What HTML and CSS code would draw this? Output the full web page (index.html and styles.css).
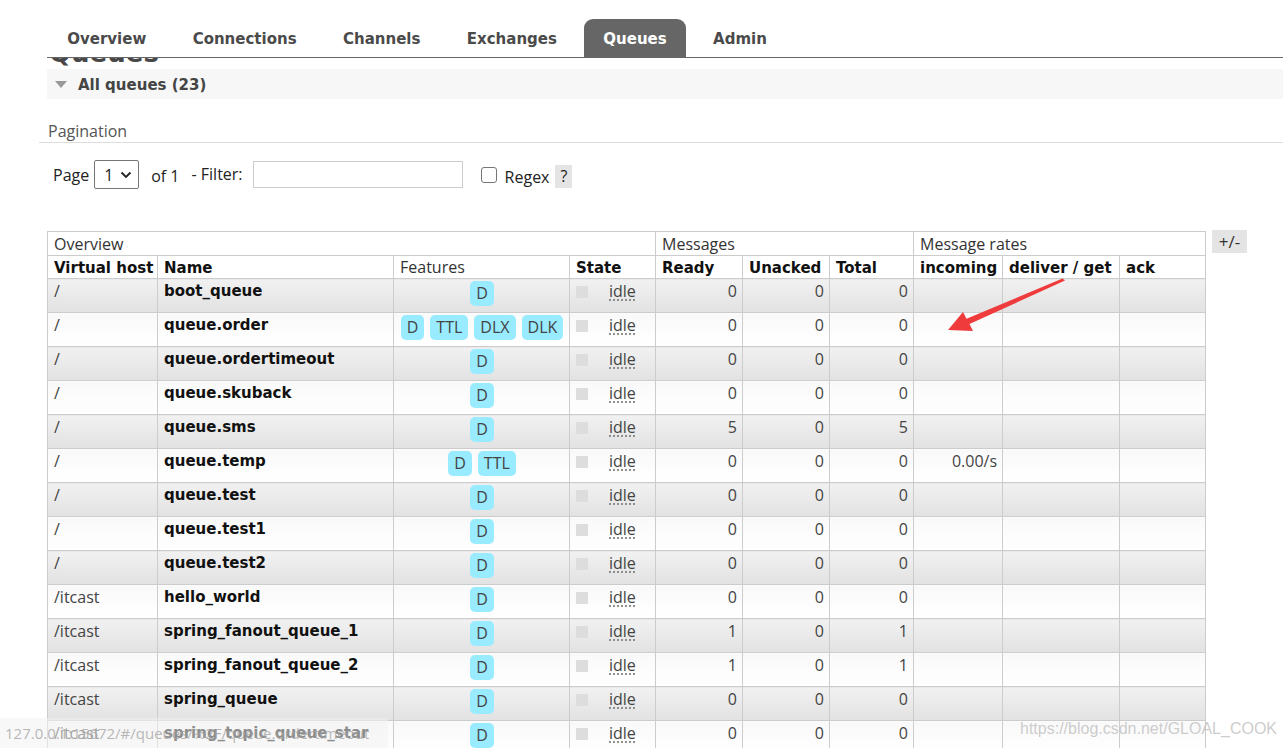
FILE: index.html
```html
<!DOCTYPE html>
<html>
<head>
<meta charset="utf-8">
<title>Queues</title>
<link rel="stylesheet" href="styles.css">
</head>
<body>
<div class="nav">
  <ul class="tabs">
    <li class="tab">Overview</li>
    <li class="tab">Connections</li>
    <li class="tab">Channels</li>
    <li class="tab">Exchanges</li>
    <li class="tab active">Queues</li>
    <li class="tab">Admin</li>
  </ul>
</div>
<div class="title-clip"><h1 class="title">Queues</h1></div>
<div class="section-bar"><span class="tri"></span><span class="section-title">All queues (23)</span></div>
<div class="pag-head">Pagination</div>
<div class="pag-row">
  <span class="lbl-page">Page</span>
  <span class="select"><span>1</span><svg class="chev" width="12" height="8" viewBox="0 0 12 8"><path d="M1.5 1.5 L6 6 L10.5 1.5" fill="none" stroke="#222" stroke-width="1.8"/></svg></span>
  <span class="lbl-of">of 1</span>
  <span class="lbl-filter">- Filter:</span>
  <span class="input"></span>
  <span class="checkbox"></span>
  <span class="lbl-regex">Regex</span>
  <span class="help">?</span>
</div>
<div class="table-wrap">
<table class="queues">
  <colgroup>
    <col class="c-vhost"><col class="c-name"><col class="c-feat"><col class="c-state">
    <col class="c-ready"><col class="c-unacked"><col class="c-total">
    <col class="c-in"><col class="c-deliver"><col class="c-ack">
  </colgroup>
  <thead>
    <tr class="grp">
      <th colspan="4">Overview</th>
      <th colspan="3">Messages</th>
      <th colspan="3">Message rates</th>
    </tr>
    <tr class="cols">
      <th>Virtual host</th><th>Name</th><th class="light">Features</th><th>State</th>
      <th>Ready</th><th>Unacked</th><th>Total</th>
      <th>incoming</th><th>deliver / get</th><th>ack</th>
    </tr>
  </thead>
  <tbody>
    <tr class="odd"><td>/</td><td class="name">boot_queue</td><td class="feat"><span class="badges"><span class="badge">D</span></span></td><td class="state"><span class="sq"></span><span class="idle">idle</span></td><td class="num">0</td><td class="num">0</td><td class="num">0</td><td class="num"></td><td></td><td></td></tr>
    <tr class="even"><td>/</td><td class="name">queue.order</td><td class="feat"><span class="badges"><span class="badge">D</span><span class="badge">TTL</span><span class="badge">DLX</span><span class="badge">DLK</span></span></td><td class="state"><span class="sq"></span><span class="idle">idle</span></td><td class="num">0</td><td class="num">0</td><td class="num">0</td><td class="num"></td><td></td><td></td></tr>
    <tr class="odd"><td>/</td><td class="name">queue.ordertimeout</td><td class="feat"><span class="badges"><span class="badge">D</span></span></td><td class="state"><span class="sq"></span><span class="idle">idle</span></td><td class="num">0</td><td class="num">0</td><td class="num">0</td><td class="num"></td><td></td><td></td></tr>
    <tr class="even"><td>/</td><td class="name">queue.skuback</td><td class="feat"><span class="badges"><span class="badge">D</span></span></td><td class="state"><span class="sq"></span><span class="idle">idle</span></td><td class="num">0</td><td class="num">0</td><td class="num">0</td><td class="num"></td><td></td><td></td></tr>
    <tr class="odd"><td>/</td><td class="name">queue.sms</td><td class="feat"><span class="badges"><span class="badge">D</span></span></td><td class="state"><span class="sq"></span><span class="idle">idle</span></td><td class="num">5</td><td class="num">0</td><td class="num">5</td><td class="num"></td><td></td><td></td></tr>
    <tr class="even"><td>/</td><td class="name">queue.temp</td><td class="feat"><span class="badges"><span class="badge">D</span><span class="badge">TTL</span></span></td><td class="state"><span class="sq"></span><span class="idle">idle</span></td><td class="num">0</td><td class="num">0</td><td class="num">0</td><td class="num">0.00/s</td><td></td><td></td></tr>
    <tr class="odd"><td>/</td><td class="name">queue.test</td><td class="feat"><span class="badges"><span class="badge">D</span></span></td><td class="state"><span class="sq"></span><span class="idle">idle</span></td><td class="num">0</td><td class="num">0</td><td class="num">0</td><td class="num"></td><td></td><td></td></tr>
    <tr class="even"><td>/</td><td class="name">queue.test1</td><td class="feat"><span class="badges"><span class="badge">D</span></span></td><td class="state"><span class="sq"></span><span class="idle">idle</span></td><td class="num">0</td><td class="num">0</td><td class="num">0</td><td class="num"></td><td></td><td></td></tr>
    <tr class="odd"><td>/</td><td class="name">queue.test2</td><td class="feat"><span class="badges"><span class="badge">D</span></span></td><td class="state"><span class="sq"></span><span class="idle">idle</span></td><td class="num">0</td><td class="num">0</td><td class="num">0</td><td class="num"></td><td></td><td></td></tr>
    <tr class="even"><td>/itcast</td><td class="name">hello_world</td><td class="feat"><span class="badges"><span class="badge">D</span></span></td><td class="state"><span class="sq"></span><span class="idle">idle</span></td><td class="num">0</td><td class="num">0</td><td class="num">0</td><td class="num"></td><td></td><td></td></tr>
    <tr class="odd"><td>/itcast</td><td class="name">spring_fanout_queue_1</td><td class="feat"><span class="badges"><span class="badge">D</span></span></td><td class="state"><span class="sq"></span><span class="idle">idle</span></td><td class="num">1</td><td class="num">0</td><td class="num">1</td><td class="num"></td><td></td><td></td></tr>
    <tr class="even"><td>/itcast</td><td class="name">spring_fanout_queue_2</td><td class="feat"><span class="badges"><span class="badge">D</span></span></td><td class="state"><span class="sq"></span><span class="idle">idle</span></td><td class="num">1</td><td class="num">0</td><td class="num">1</td><td class="num"></td><td></td><td></td></tr>
    <tr class="odd"><td>/itcast</td><td class="name">spring_queue</td><td class="feat"><span class="badges"><span class="badge">D</span></span></td><td class="state"><span class="sq"></span><span class="idle">idle</span></td><td class="num">0</td><td class="num">0</td><td class="num">0</td><td class="num"></td><td></td><td></td></tr>
    <tr class="even"><td>/itcast</td><td class="name">spring_topic_queue_star</td><td class="feat"><span class="badges"><span class="badge">D</span></span></td><td class="state"><span class="sq"></span><span class="idle">idle</span></td><td class="num">0</td><td class="num">0</td><td class="num">0</td><td class="num"></td><td></td><td></td></tr>
  </tbody>
</table>
<span class="toggle">+/-</span>
</div>
<svg class="arrow" width="1283" height="748" viewBox="0 0 1283 748">
  <polygon points="948,330 963,312 966.5,318.8 1062.5,278.6 1065,280.6 969.5,323.9 973,331" fill="#ef3b3b"/>
</svg>
<div class="statusbar">127.0.0.1:15672/#/queues/%2F/queue.ordertimeout</div>
<div class="watermark">https://blog.csdn.net/GLOAL_COOK</div>
</body>
</html>
```

FILE: styles.css
```css
html, body {
  margin: 0;
  padding: 0;
  overflow: hidden;
  background: #fff;
}
body {
  font-family: "Open Sans", "Noto Sans", sans-serif;
  font-size: 16px;
  color: #444;
  width: 1283px;
  height: 748px;
  position: relative;
}

/* nav */
.nav {
  margin-left: 47px;
  padding-top: 19px;
  border-bottom: 1px solid #666;
}
.tabs {
  list-style: none;
  margin: 0;
  padding: 0 0 0 1px;
  display: flex;
  gap: 8px;
}
.tab {
  font-family: "DejaVu Sans", Verdana, sans-serif;
  font-weight: bold;
  font-size: 15px;
  color: #4a4a4a;
  height: 38px;
  box-sizing: border-box;
  padding: 2px 19.2px 0;
  line-height: 36px;
  border-radius: 9px 9px 0 0;
}
.tab.active {
  background: #666;
  color: #fff;
}

/* clipped heading */
.title-clip {
  height: 11px;
  overflow: hidden;
  margin-left: 49px;
}
.title {
  margin: -20px 0 0 0;
  font-family: "DejaVu Sans", Verdana, sans-serif;
  font-weight: bold;
  font-size: 26px;
  line-height: 30px;
  color: #484848;
}

.section-bar {
  margin-left: 47px;
  height: 30px;
  background: #f7f7f7;
  display: flex;
  align-items: center;
  padding-left: 8px;
}
.tri {
  width: 0;
  height: 0;
  border-left: 6.5px solid transparent;
  border-right: 6.5px solid transparent;
  border-top: 7px solid #999;
  margin-right: 11px;
}
.section-title {
  font-family: "DejaVu Sans", Verdana, sans-serif;
  font-weight: bold;
  font-size: 15px;
  color: #444;
  padding-top: 1px;
}

/* pagination */
.pag-head {
  margin: 22px 0 0 39px;
  padding: 0 0 1px 9px;
  line-height: 20px;
  color: #555;
  border-bottom: 1px solid #ddd;
}
.pag-row {
  margin: 17px 0 0 53px;
  display: flex;
  align-items: center;
  height: 29px;
  color: #222;
}
.select {
  margin-left: 5px;
  width: 45px;
  height: 29px;
  box-sizing: border-box;
  border: 1px solid #767676;
  border-radius: 2px;
  display: flex;
  align-items: center;
  padding-left: 9px;
  gap: 7px;
}
.chev { display: block; }
.lbl-of { margin-left: 12px; margin-top: 2px; }
.lbl-filter { margin-left: 12px; margin-top: -2px; }
.input {
  margin-left: 10px;
  width: 210px;
  height: 27px;
  box-sizing: border-box;
  border: 1px solid #ccc;
}
.checkbox {
  margin-left: 18px;
  width: 16px;
  height: 16px;
  box-sizing: border-box;
  border: 1px solid #767676;
  border-radius: 3px;
}
.lbl-regex { margin-left: 8px; margin-top: 5px; }
.help {
  margin-left: 6px;
  margin-top: 4px;
  width: 17px;
  height: 23px;
  background: #e4e4e4;
  text-align: center;
  line-height: 23px;
}

/* table */
.table-wrap {
  margin: 42px 0 0 47px;
  display: flex;
  align-items: flex-start;
  gap: 6px;
}
.queues {
  border-collapse: collapse;
  table-layout: fixed;
  width: 1158px;
}
.c-vhost { width: 110px; }
.c-name { width: 236px; }
.c-feat { width: 176px; }
.c-state { width: 86px; }
.c-ready { width: 87px; }
.c-unacked { width: 87px; }
.c-total { width: 84px; }
.c-in { width: 89px; }
.c-deliver { width: 117px; }
.c-ack { width: 86px; }

.queues th, .queues td {
  border: 1px solid #ccc;
  padding: 0 5px 0 6px;
  text-align: left;
  white-space: nowrap;
  overflow: hidden;
}
.queues tr.grp { height: 24px; }
.queues tr.grp th {
  font-weight: normal;
  color: #333;
  line-height: 20px;
}
.queues tr.cols { height: 23px; }
.queues tr.cols th {
  font-family: "DejaVu Sans", Verdana, sans-serif;
  font-weight: bold;
  font-size: 15px;
  color: #111;
  line-height: 20px;
  padding-top: 1px;
}
.queues tr.cols th.light {
  font-family: "Open Sans", "Noto Sans", sans-serif;
  font-size: 16px;
  font-weight: normal;
  color: #333;
  padding-top: 0;
}
.queues tbody tr { height: 34px; }
.queues tbody td {
  vertical-align: top;
  padding-top: 1px;
  line-height: 22px;
  color: #444;
}
.queues tbody tr.odd td {
  background: linear-gradient(#f1f1f1, #e2e2e2);
}
.queues tbody tr.even td {
  background: linear-gradient(#f9f9f9, #ffffff);
}
.queues td.name {
  font-family: "DejaVu Sans", Verdana, sans-serif;
  font-weight: bold;
  font-size: 15px;
  color: #111;
}
.queues td.num { text-align: right; }
.queues td.feat { text-align: center; padding-top: 2px; }
.badges {
  display: inline-flex;
  gap: 6px;
  vertical-align: top;
}
.badge {
  display: inline-block;
  height: 25px;
  line-height: 25px;
  padding: 0 6px;
  min-width: 11px;
  background: #99ebff;
  border-radius: 5px;
  color: #444;
}
.queues td.state {
  padding-top: 1px;
}
.sq {
  display: inline-block;
  width: 12px;
  height: 12px;
  background: #ddd;
  margin: 6px 21px 0 0;
  vertical-align: top;
}
.idle {
  text-decoration: underline dotted #777;
  text-underline-offset: 3px;
  vertical-align: top;
}

.toggle {
  margin-top: -1px;
  width: 35px;
  height: 23px;
  line-height: 23px;
  text-align: center;
  background: #e4e4e4;
  color: #333;
  font-size: 17px;
}

/* overlays */
.arrow {
  position: absolute;
  left: 0;
  top: 0;
  pointer-events: none;
}
.statusbar {
  position: absolute;
  left: 0;
  bottom: 0;
  width: 383px;
  height: 30px;
  line-height: 30px;
  padding-left: 5px;
  background: rgba(242, 242, 242, 0.55);
  color: rgba(160, 160, 160, 0.75);
  font-size: 15px;
  border-top-right-radius: 3px;
}
.watermark {
  position: absolute;
  left: 1020px;
  top: 720px;
  font-family: "Liberation Sans", Arial, sans-serif;
  font-size: 16px;
  color: rgba(195, 195, 195, 0.85);
}
```
